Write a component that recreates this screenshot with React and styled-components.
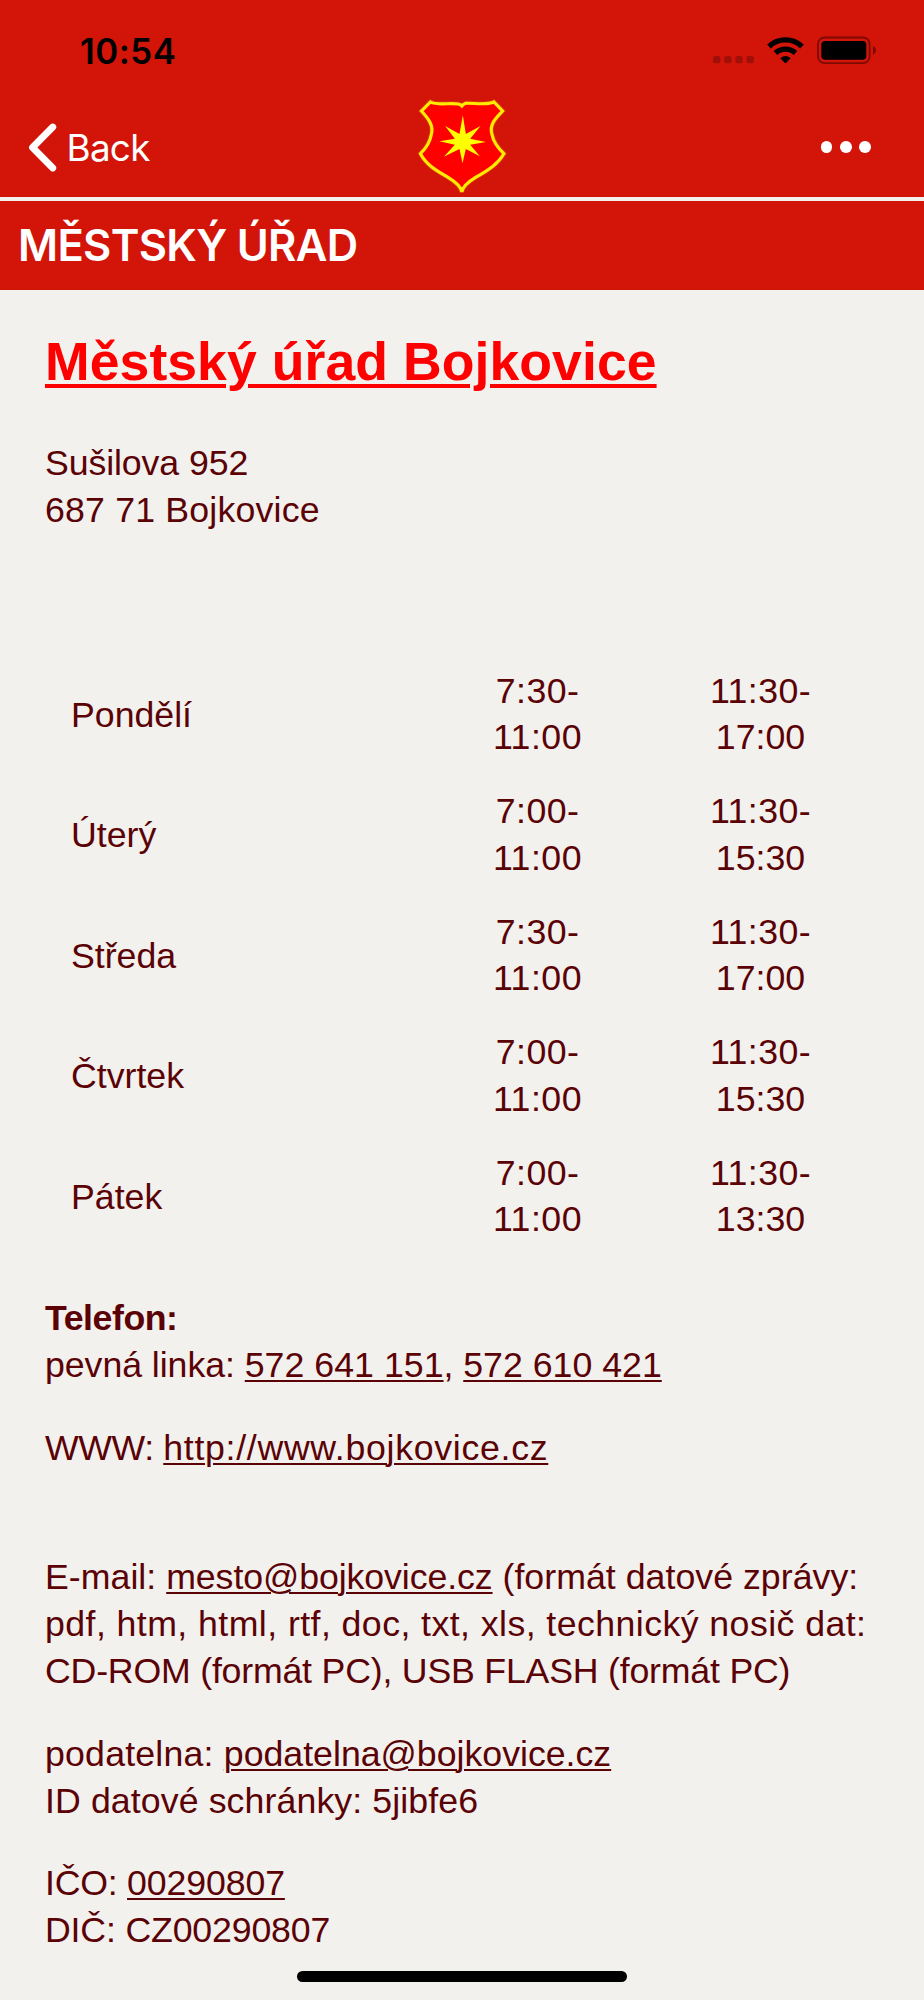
import styled, { createGlobalStyle } from "styled-components";

const HOURS = [
  { day: "Pondělí", morning: ["7:30-", "11:00"], afternoon: ["11:30-", "17:00"] },
  { day: "Úterý", morning: ["7:00-", "11:00"], afternoon: ["11:30-", "15:30"] },
  { day: "Středa", morning: ["7:30-", "11:00"], afternoon: ["11:30-", "17:00"] },
  { day: "Čtvrtek", morning: ["7:00-", "11:00"], afternoon: ["11:30-", "15:30"] },
  { day: "Pátek", morning: ["7:00-", "11:00"], afternoon: ["11:30-", "13:30"] },
];

const SHIELD =
  "M93 67 C112 78 150 69 176 73 Q183 74 187 79 Q191 74 198 71 C220 69 258 78 283 67 L309 94 C287 116 269 136 277 163 C282 190 297 207 313 222 C292 258 258 275 227 294 C207 306 190 318 187 337 C184 318 167 306 147 294 C116 275 82 258 63 222 C79 207 91 190 96 163 C103 136 86 116 66 94 Z";

const GlobalStyle = createGlobalStyle`
  * {
    box-sizing: border-box;
  }
  body {
    margin: 0;
    background-color: #f2f1ed;
  }
`;

const Screen = styled.div`
  display: flex;
  flex-direction: column;
  width: 924px;
  height: 2000px;
  overflow: hidden;
  background-color: #f2f1ed;
  color: #5a0205;
  font-family: "Liberation Sans", Arial, sans-serif;
`;

const Header = styled.header`
  height: 196.7px;
  background-color: #d31408;
  font-family: Inter, sans-serif;
`;

const StatusBar = styled.div`
  display: flex;
  justify-content: space-between;
  align-items: flex-start;
  height: 98.3px;
  padding: 36px 48px 0 80px;
`;

const Time = styled.div`
  font-size: 34.8px;
  font-weight: 600;
  line-height: 30px;
  letter-spacing: 0.5px;
  color: #000;
`;

const NavBar = styled.nav`
  display: grid;
  grid-template-columns: 1fr 92px 1fr;
  height: 98.4px;
  padding: 0 28px;
`;

const BackButton = styled.button`
  display: flex;
  align-items: center;
  gap: 9.5px;
  padding: 0;
  border: 0;
  background: none;
  color: #fff;
  font-family: inherit;
  font-size: 36.8px;
  font-weight: 400;
  letter-spacing: -0.7px;
`;

const MoreButton = styled.button`
  display: flex;
  align-items: center;
  justify-content: flex-end;
  gap: 7.7px;
  padding: 0 25px 1px 0;
  border: 0;
  background: none;
`;

const Dot = styled.span`
  width: 11.6px;
  height: 11.6px;
  border-radius: 50%;
  background-color: #fff;
`;

const TitleBar = styled.div`
  height: 93.3px;
  padding-left: 18px;
  border-top: 4px solid #f2f1ed;
  background-color: #d31408;
  color: #fff;
  font-family: Inter, sans-serif;
  font-size: 43.5px;
  font-weight: 600;
  line-height: 89px;
  letter-spacing: -0.7px;
`;

const Content = styled.main`
  flex: 1;
  padding: 40px 45px 0;
  font-size: 35.7px;
  line-height: 46.87px;
`;

const Heading = styled.h1`
  margin: 0 0 46.5px;
  color: #fe0000;
  font-size: 53.57px;
  line-height: 64px;
  letter-spacing: 0.06px;
  text-decoration: underline;
  text-decoration-thickness: 3.5px;
  text-underline-offset: 3.5px;
  white-space: nowrap;
`;

const Block = styled.p`
  margin: 0 0 ${({ $gap }) => $gap || 35.7}px;
`;

const Line = styled.span`
  display: block;
  white-space: nowrap;
  letter-spacing: ${({ $spacing }) => $spacing || 0}px;
`;

const Link = styled.a`
  color: inherit;
  letter-spacing: ${({ $spacing }) => $spacing || 0}px;
  text-decoration: underline;
  text-decoration-thickness: 2px;
  text-underline-offset: 3px;
`;

const Hours = styled.div`
  margin-bottom: 38.5px;
`;

const HoursRow = styled.div`
  display: grid;
  grid-template-columns: 355px 223px 223px;
  align-items: center;
  height: 120.53px;
  padding-left: 26px;
`;

const Day = styled.div`
  padding-top: 2px;
`;

const Times = styled.div`
  text-align: center;
`;

const HomeBar = styled.div`
  flex: none;
  align-self: center;
  width: 330px;
  height: 11px;
  margin-bottom: 18px;
  border-radius: 6px;
  background-color: #000;
`;

const StatusIcons = () => (
  <svg width="163.3" height="28.7" viewBox="68 48 490 86">
    <g fill="#a11008">
      <rect x="68" y="108" width="22" height="22" rx="6" />
      <rect x="101.5" y="108" width="22" height="22" rx="6" />
      <rect x="135" y="108" width="22" height="22" rx="6" />
      <rect x="168.5" y="108" width="22" height="22" rx="6" />
    </g>
    <g fill="none" stroke="#000" strokeWidth="16">
      <path d="M236 79.5 A72 72 0 0 1 335 79.5" />
      <path d="M255.5 99 A44 44 0 0 1 315.5 99" />
    </g>
    <path d="M270 115 Q285.5 101 301 115 L288 128 Q285.5 130.5 283 128 Z" />
    <rect
      x="383"
      y="52.5"
      width="155"
      height="77"
      rx="20"
      fill="none"
      stroke="#7d0b04"
      strokeWidth="5.5"
    />
    <rect x="393" y="63" width="135" height="56" rx="11" />
    <path d="M548 78 Q557 82 557 91 Q557 100 548 104 Z" fill="#7d0b04" />
  </svg>
);

const Crest = () => (
  <svg width="92" height="98.4" viewBox="50 55 275 295">
    <path d={SHIELD} fill="none" stroke="#e8500c" strokeWidth="15" strokeOpacity="0.5" />
    <path d={SHIELD} fill="#fe0000" stroke="#ffec00" strokeWidth="9.5" />
    <path
      d="M190 107 L199 163 L243 139 L212 177 L259 187 L212 195 L241 230 L199 208 L189 251 L180 208 L133 231 L166 195 L120 185 L166 177 L137 139 L180 163 Z"
      fill="#ffff00"
    />
  </svg>
);

const App = () => (
  <>
    <GlobalStyle />
    <Screen>
      <Header>
        <StatusBar>
          <Time>10:54</Time>
          <StatusIcons />
        </StatusBar>
        <NavBar>
          <BackButton>
            <svg width="29" height="49" viewBox="0 0 29 49">
              <path
                d="M24.8 4 L4.5 24.5 L24.8 45"
                fill="none"
                stroke="#fff"
                strokeWidth="6.8"
                strokeLinecap="round"
                strokeLinejoin="round"
              />
            </svg>
            Back
          </BackButton>
          <Crest />
          <MoreButton aria-label="More">
            <Dot />
            <Dot />
            <Dot />
          </MoreButton>
        </NavBar>
      </Header>
      <TitleBar>MĚSTSKÝ ÚŘAD</TitleBar>

      <Content>
        <Heading>Městský úřad Bojkovice</Heading>
        <Block $gap={119.9}>
          <Line $spacing={-0.1}>Sušilova 952</Line>
          <Line $spacing={0.18}>687 71 Bojkovice</Line>
        </Block>

        <Hours>
          {HOURS.map(({ day, morning, afternoon }) => (
            <HoursRow key={day}>
              <Day>{day}</Day>
              {[morning, afternoon].map(([from, to]) => (
                <Times key={from}>
                  <Line $spacing={0.4}>{from}</Line>
                  <Line $spacing={to === "11:00" ? 0.5 : 0}>{to}</Line>
                </Times>
              ))}
            </HoursRow>
          ))}
        </Hours>

        <Block>
          <Line as="strong" $spacing={-0.45}>
            Telefon:
          </Line>
          <Line $spacing={-0.05}>
            pevná linka: <Link $spacing={0.03}>572 641 151</Link>, <Link>572 610 421</Link>
          </Line>
        </Block>
        <Block $gap={82.8}>
          <Line $spacing={-0.4}>
            WWW: <Link $spacing={0.7}>http://www.bojkovice.cz</Link>
          </Line>
        </Block>
        <Block>
          <Line $spacing={0.03}>
            E-mail: <Link $spacing={-0.08}>mesto@bojkovice.cz</Link> (formát datové zprávy:
          </Line>
          <Line $spacing={0.43}>pdf, htm, html, rtf, doc, txt, xls, technický nosič dat:</Line>
          <Line $spacing={-0.2}>CD-ROM (formát PC), USB FLASH (formát PC)</Line>
        </Block>
        <Block>
          <Line $spacing={0.2}>
            podatelna: <Link>podatelna@bojkovice.cz</Link>
          </Line>
          <Line $spacing={0.1}>ID datové schránky: 5jibfe6</Line>
        </Block>
        <Block $gap={1}>
          <Line $spacing={-0.25}>
            IČO: <Link $spacing={-0.12}>00290807</Link>
          </Line>
          <Line $spacing={-0.17}>DIČ: CZ00290807</Line>
        </Block>
      </Content>
      <HomeBar />
    </Screen>
  </>
);

export default App;
